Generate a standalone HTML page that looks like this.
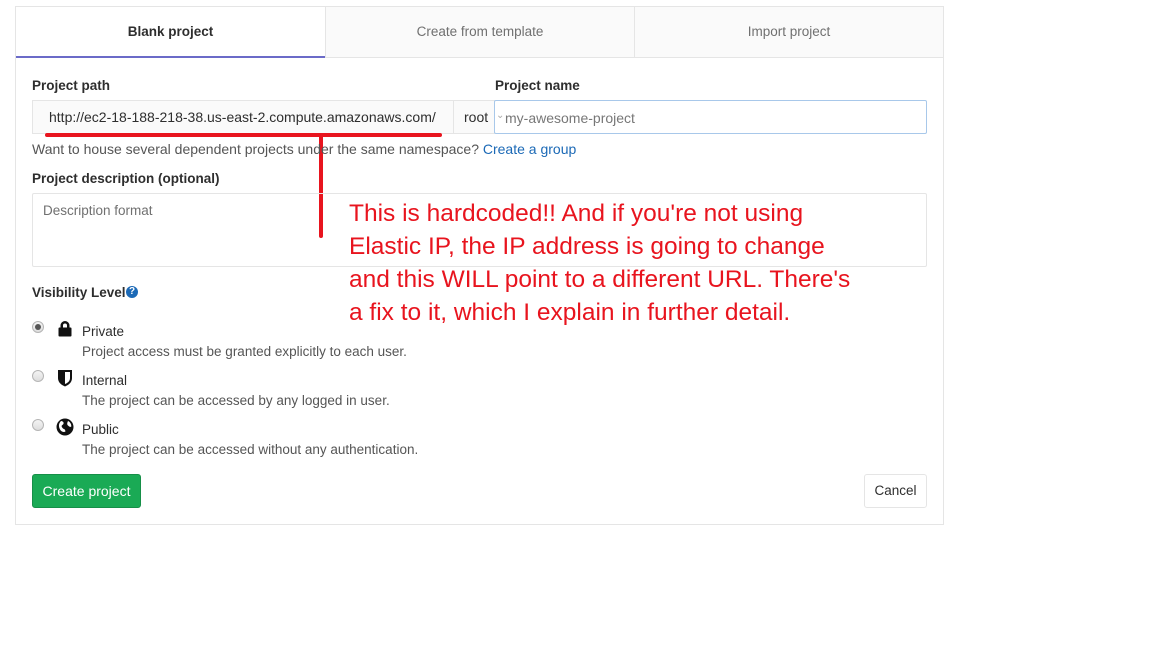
<!DOCTYPE html>
<html><head><meta charset="utf-8"><style>
*{box-sizing:border-box;margin:0;padding:0}
body{width:1152px;height:648px;background:#fff;font-family:"Liberation Sans",sans-serif;font-size:13.5px;color:#2e2e2e;position:relative;overflow:hidden}
.a{position:absolute}
.box{left:15px;top:6px;width:929px;height:519px;border:1px solid #e5e5e5}
.tab{top:7px;height:51px;line-height:49px;text-align:center;font-size:13.5px;color:#707070;background:#fafafa;border-bottom:1px solid #e5e5e5;border-left:1px solid #e5e5e5}
.lbl{font-weight:bold;font-size:13.5px;color:#2e2e2e}
.red{color:#e8141e;font-size:24.5px;line-height:33px}
.radio{width:12px;height:12px;border-radius:50%;border:1px solid #b5b5b5;background:linear-gradient(#f4f4f4,#ddd)}
.t{font-size:13.5px;color:#2e2e2e}
.d{font-size:13.5px;color:#555}
</style></head><body>
<div class="a box"></div>
<div class="a tab" style="left:16px;width:309px;background:#fff;color:#2e2e2e;font-weight:bold;border-left:none;border-bottom:2px solid #6b6bc8">Blank project</div>
<div class="a tab" style="left:325px;width:309px">Create from template</div>
<div class="a tab" style="left:634px;width:309px">Import project</div>

<div class="a lbl" style="left:32px;top:78px">Project path</div>
<div class="a lbl" style="left:495px;top:78px">Project name</div>
<div class="a" style="left:32px;top:100px;width:463px;height:34px;background:#fafafa;border:1px solid #e5e5e5"></div>
<div class="a" style="left:453px;top:100px;width:1px;height:34px;background:#e5e5e5"></div>
<div class="a t" style="left:49px;top:109px;font-size:14px">http://ec2-18-188-218-38.us-east-2.compute.amazonaws.com/</div>
<div class="a t" style="left:464px;top:109px;font-size:14px">root</div>
<div class="a" style="left:494px;top:100px;width:433px;height:34px;border:1px solid #a8c8ea;border-radius:2px;background:#fff"></div>
<div class="a" style="left:496px;top:110px;font-size:10px;color:#aaa">⌄</div>
<div class="a" style="left:505px;top:110px;color:#777;font-size:14px">my-awesome-project</div>
<div class="a" style="left:45px;top:133px;width:397px;height:4px;background:#e8141e;border-radius:2px"></div>
<div class="a" style="left:319px;top:133px;width:4px;height:105px;background:#e8141e;border-radius:2px"></div>
<div class="a d" style="left:32px;top:141px;font-size:14px">Want to house several dependent projects under the same namespace? <span style="color:#1b69b6">Create a group</span></div>

<div class="a lbl" style="left:32px;top:171px">Project description (optional)</div>
<div class="a" style="left:32px;top:193px;width:895px;height:74px;border:1px solid #e5e5e5;border-radius:2px"></div>
<div class="a d" style="left:43px;top:203px;color:#707070">Description format</div>
<div class="a red" style="left:349px;top:197px">This is hardcoded!! And if you're not using<br>Elastic IP, the IP address is going to change<br>and this WILL point to a different URL. There's<br>a fix to it, which I explain in further detail.</div>

<div class="a lbl" style="left:32px;top:285px">Visibility Level</div>
<div class="a" style="left:126px;top:286px;width:12px;height:12px;border-radius:50%;background:#1b69b6;color:#fff;font-size:10px;line-height:12px;text-align:center;font-weight:bold">?</div>

<div class="a radio" style="left:32px;top:321px"><div style="width:6px;height:6px;border-radius:50%;background:#555;margin:2px"></div></div>
<svg class="a" style="left:57px;top:320px" width="16" height="17" viewBox="0 0 16 17"><path d="M3.5 8V5.5a4.5 4.5 0 0 1 9 0V8h-2.5V5.5a2 2 0 0 0-4 0V8z" fill="#111"/><rect x="1.5" y="7.5" width="13" height="9" rx="1" fill="#111"/></svg>
<div class="a t" style="left:82px;top:324px">Private</div>
<div class="a d" style="left:82px;top:344px">Project access must be granted explicitly to each user.</div>

<div class="a radio" style="left:32px;top:370px"></div>
<svg class="a" style="left:57px;top:369px" width="16" height="18" viewBox="0 0 16 18"><path d="M1 1h14v8c0 4.5-3.5 7-7 8.5C4.5 16 1 13.5 1 9z" fill="#111"/><path d="M8 3h5v6c0 3.2-2.4 5-5 6z" fill="#fff"/></svg>
<div class="a t" style="left:82px;top:373px">Internal</div>
<div class="a d" style="left:82px;top:393px">The project can be accessed by any logged in user.</div>

<div class="a radio" style="left:32px;top:419px"></div>
<svg class="a" style="left:56px;top:418px" width="18" height="18" viewBox="0 0 18 18"><circle cx="9" cy="9" r="8.5" fill="#111"/><path d="M5 3c2.2 0 3.3 2 2.2 3.2s-2.2 1-1.1 3.2 3.3 1 3.3 4.2c-2.2 1-4.3 0-5.4-2.2S2 6 5 3zM12 3c2 1 3.5 3 3.3 5.5-1 1-2.2 0-3.3-1s-1-2.3 0-4.5z" fill="#fff"/></svg>
<div class="a t" style="left:82px;top:422px">Public</div>
<div class="a d" style="left:82px;top:442px">The project can be accessed without any authentication.</div>

<div class="a" style="left:32px;top:474px;width:109px;height:34px;background:#1aaa55;border:1px solid #168f48;border-radius:3px;color:#fff;line-height:32px;text-align:center;font-size:14px">Create project</div>
<div class="a" style="left:864px;top:474px;width:63px;height:34px;background:#fff;border:1px solid #e5e5e5;border-radius:3px;line-height:32px;text-align:center;font-size:13.5px">Cancel</div>
</body></html>
